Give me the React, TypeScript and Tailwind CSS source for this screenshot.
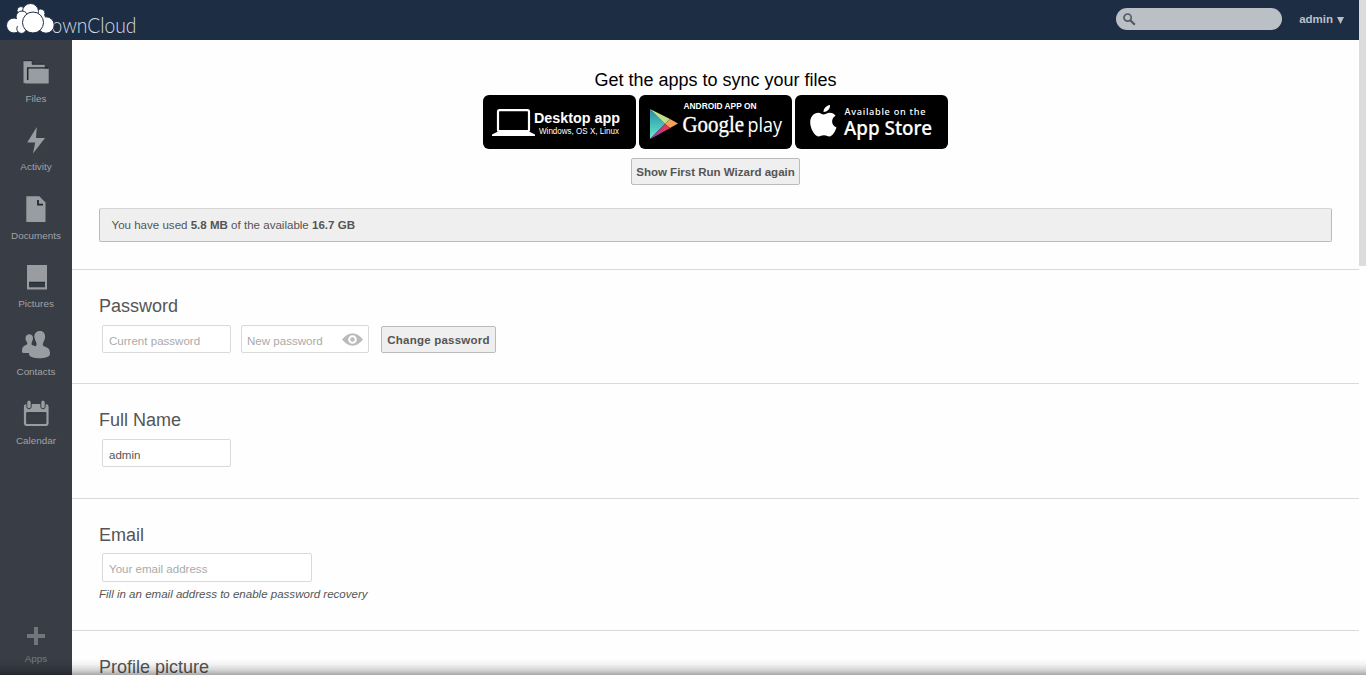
import React from "react";

const sans = "font-['Liberation_Sans',Arial,sans-serif]";

function Logo() {
  return (
    <svg width="140" height="40" viewBox="0 0 140 40" className="block" role="img" aria-label="ownCloud">
      <text x="51.500" y="33" textLength="85" lengthAdjust="spacingAndGlyphs" fill="#d5dae1" fontFamily="Lato, sans-serif" fontWeight="300" fontSize="21">
        ownCloud
      </text>
      <g fill="#fff" stroke="#1d2d44" strokeWidth="1">
        <circle cx="21" cy="10.500" r="4" />
        <circle cx="40.500" cy="13.500" r="4.500" />
        <circle cx="30.500" cy="11.500" r="8" />
        <circle cx="22" cy="17" r="6" />
        <circle cx="14" cy="25.500" r="7.500" />
        <circle cx="21.500" cy="28.700" r="4.700" />
        <circle cx="22.500" cy="18" r="5.500" stroke="none" />
        <circle cx="22" cy="22" r="6" stroke="none" />
        <circle cx="46" cy="25" r="8.200" />
        <circle cx="40" cy="18" r="5" stroke="none" />
        <circle cx="33" cy="22.500" r="10.500" />
      </g>
    </svg>
  );
}

const icons: Record<string, React.ReactNode> = {
  Files: (
    <>
      <path d="M3.500 6h8.700v3.500h12.500V28H3.500z" />
      <path d="M3.500 5.700h8.700v3.500h12.500" fill="none" stroke="#22272f" strokeWidth=".8" />
      <path d="M7.700 25V13H28" fill="none" stroke="#22272f" strokeWidth="1.500" />
      <path d="M9 13.700h19.700v14.800H5V26h4z" />
    </>
  ),
  Activity: <path d="M16.800 4 7.200 19.500h8L13 30.500 25 15h-9z" />,
  Documents: (
    <>
      <path d="M6.300 4.200h13l6.200 6.200V30H6.300z" />
      <path d="M18 8v4.600h5" fill="none" stroke="#22272f" strokeWidth="1.800" />
    </>
  ),
  Pictures: (
    <>
      <path d="M7 5h20v24.500H7z" />
      <path d="M9 22h16v5.300H9z" fill="#343a43" />
      <path d="M9 22.300h16" stroke="#22272f" />
    </>
  ),
  Contacts: (
    <>
      <path d="M9.300 6.200c2.400 0 3.900 1.800 3.700 4.400-.1 2.400-1.500 3.400-1.500 5.400 0 1.500 3.500 1.500 5 3v6H3.500c-1.500 0-1.700-1-1.500-2.500.3-4.500 3-5 4.500-5.700 1-.5 1-1.500.5-2.500-.8-1.300-1.500-2-1.500-3.700 0-2.600 1.400-4.400 3.800-4.400z" />
      <path d="M19.800 3c3.700 0 5.500 2.700 5.300 6.300-.2 3-2 4.700-2.300 7-.2 1.800 1.200 2.200 3 2.800 3 1 4.200 2.700 4.200 6.900 0 3-6 4.300-10.300 4.300C14.500 30.300 9 29 9 26c0-4 1.700-5.500 4.500-6.700 2-.8 3.200-1.200 3-3-.2-2.300-2-4-2.200-7C14.200 5.700 16.200 3 19.800 3z" />
      <path d="M13.800 9.500c.3 2.800 1.800 4.500 2.100 6.800" fill="none" stroke="#2b3038" strokeWidth=".8" />
    </>
  ),
  Calendar: (
    <>
      <rect x="5" y="8" width="22.500" height="20" rx="2" fill="none" stroke="#999ca0" strokeWidth="2.200" />
      <path d="M4.500 8h23.500v7.500H4.500z" />
      <path d="M7 15.700h19" stroke="#22272f" strokeWidth=".8" />
      <g stroke="#2b3038" strokeWidth=".9">
        <rect x="6.800" y="3" width="4.400" height="8.800" rx="2.200" />
        <rect x="20.800" y="3" width="4.400" height="8.800" rx="2.200" />
      </g>
    </>
  ),
  Apps: <path d="M14 12h4v7h7v4h-7v7h-4v-7H7v-4h7z" />,
};

function NavItem({ name, dim }: { name: string; dim?: boolean }) {
  return (
    <a className={"flex h-[68.350px] shrink-0 flex-col items-center " + (dim ? "opacity-60" : "")}>
      <svg width="32" height="32" viewBox="0 0 32 32" fill="#999ca0" className="block overflow-visible">
        {icons[name]}
      </svg>
      <span className="mt-[6px] text-[9.900px] leading-[12px] text-[#a0a3a7]">{name}</span>
    </a>
  );
}

function DesktopBadge() {
  return (
    <svg width="153" height="54" viewBox="0 0 153 54" className="block rounded-[6px] bg-black">
      <rect x="15" y="15.200" width="31" height="21" rx="1.500" fill="none" stroke="#fff" strokeWidth="2.200" />
      <path d="M14 37h33l5 2.500V41H9v-1.500z" fill="#fff" />
      <g fill="#fff" fontFamily="'Liberation Sans', Arial, sans-serif">
        <text x="51" y="27.500" fontSize="14" fontWeight="700" textLength="86" lengthAdjust="spacingAndGlyphs">Desktop app</text>
        <text x="56" y="39" fontSize="8.500" textLength="80" lengthAdjust="spacingAndGlyphs">Windows, OS X, Linux</text>
      </g>
    </svg>
  );
}

function PlayBadge() {
  return (
    <svg width="153" height="54" viewBox="0 0 153 54" className="block rounded-[6px] bg-black">
      <defs>
        <linearGradient id="play" x1="0" y1="0" x2="0" y2="1">
          <stop offset="0" stopColor="#2b87a8" />
          <stop offset="1" stopColor="#5ff0c8" />
        </linearGradient>
      </defs>
      <path d="M11 14v30l15-15z" fill="url(#play)" />
      <path d="M11 14l15 15 5-5z" fill="#bfe08a" />
      <path d="M31 24l-5 5 5 4 8-4.500z" fill="#f5a35c" />
      <path d="M26 29l5 4.300L20 39z" fill="#e8365f" />
      <path d="M26 29L11 44l12-6.500z" fill="#c43a78" />
      <path d="M19 36l-8 8 9-5z" fill="#8b48b8" />
      <g fill="#fff">
        <text x="44.500" y="14" fontSize="8.300" fontWeight="700" fontFamily="'Liberation Sans', Arial, sans-serif" textLength="73" lengthAdjust="spacingAndGlyphs">ANDROID APP ON</text>
        <text x="43.500" y="37" fontSize="22.500" fontFamily="'Liberation Serif', serif" textLength="61.500" lengthAdjust="spacingAndGlyphs" stroke="#fff" strokeWidth=".35">Google</text>
        <text x="108.500" y="37" fontSize="20" fontWeight="400" fontFamily="'Open Sans', sans-serif" textLength="34.500" lengthAdjust="spacingAndGlyphs">play</text>
      </g>
    </svg>
  );
}

function AppStoreBadge() {
  return (
    <svg width="153" height="54" viewBox="0 0 153 54" className="block rounded-[6px] bg-black">
      <g fill="#fff">
        <path d="M28.500 17c0-4 3-6.500 6.500-7 .3 4-2.800 6.800-6.500 7z" />
        <path d="M28.500 19.500c1.500 0 3.500-1.800 6.300-1.800 2.500 0 4.500 1.200 5.700 3-5 3-4.200 9.700 1 11.800-1.500 4.300-4 8.900-7.200 8.900-2 0-3-1.200-5.400-1.200s-3.500 1.200-5.400 1.200c-4 0-8.300-8-8.300-13.800 0-6.500 4-9.900 7.900-9.900 2.500 0 4 1.800 5.400 1.800z" />
        <g fontFamily="'Noto Sans', sans-serif">
          <text x="49.500" y="20" fontSize="9.200" fontWeight="500" textLength="81" lengthAdjust="spacing">Available on the</text>
          <text x="49" y="39.500" fontSize="19" fontWeight="500" textLength="88" lengthAdjust="spacingAndGlyphs" stroke="#fff" strokeWidth=".2">App Store</text>
        </g>
      </g>
    </svg>
  );
}

function Field({ className, children, dark }: { className: string; children: React.ReactNode; dark?: boolean }) {
  return (
    <div className={"flex shrink-0 items-center rounded-[2px] border border-[#d9d9d9] bg-white px-[6px] pt-[4px] text-[11.550px] leading-[14px] " + (dark ? "text-[#555] " : "text-[#aaa] ") + className}>
      {children}
    </div>
  );
}

function Button({ className, children }: { className: string; children: React.ReactNode }) {
  return (
    <button className={"flex h-[27px] items-center justify-center whitespace-nowrap rounded-[2px] border border-[#bbb] bg-[#efefef] text-[11.520px] font-bold leading-[14px] text-[#555] " + className}>
      {children}
    </button>
  );
}

function Section({ title, className, children }: { title: string; className: string; children?: React.ReactNode }) {
  return (
    <section className={"shrink-0 border-b border-[#d9d9d9] pl-[27px] pt-[25px] " + className}>
      <h2 className="text-[18px] leading-[22px] text-[#555]">{title}</h2>
      {children}
    </section>
  );
}

export default function App() {
  return (
    <div className={"relative flex h-[675px] w-[1366px] overflow-hidden bg-white " + sans}>
      <div className="flex w-[1359px] flex-col">
        <header className="flex h-[40px] shrink-0 items-center justify-between bg-[#1d2d44]">
          <Logo />
          <div className="flex items-center pb-[2px] pr-[15px]">
            <div className="flex h-[22px] w-[166px] items-center rounded-full bg-[#bbc0c7] pl-[7px]">
              <svg width="13" height="13" viewBox="0 0 13 13" fill="none" stroke="#555b63">
                <circle cx="4.600" cy="4.600" r="3.600" strokeWidth="1.700" />
                <path d="M7.300 7.300l4.500 4.500" strokeWidth="2.300" />
              </svg>
            </div>
            <span className="ml-[17px] text-[11.500px] font-bold leading-[14px] text-[#bbc0c7]">admin</span>
            <svg width="7" height="7" viewBox="0 0 7 7" fill="#bbc0c7" className="ml-[4px] mt-[3px]">
              <path d="M0 0h7L3.500 7z" />
            </svg>
          </div>
        </header>
        <div className="flex min-h-0 flex-1">
          <nav className="flex w-[72px] shrink-0 flex-col justify-between bg-[#383d46] pt-[15px]">
            <div className="flex flex-col">
              <NavItem name="Files" />
              <NavItem name="Activity" />
              <NavItem name="Documents" />
              <NavItem name="Pictures" />
              <NavItem name="Contacts" />
              <NavItem name="Calendar" />
            </div>
            <div className="-mb-[8px]">
              <NavItem name="Apps" dim />
            </div>
          </nav>
          <main className="flex min-w-0 flex-1 flex-col overflow-hidden bg-[#fefefe]">
            <section className="flex h-[230px] shrink-0 flex-col items-center border-b border-[#d9d9d9] px-[27px] pt-[29px]">
              <h2 className="text-[18px] leading-[22px] text-black">Get the apps to sync your files</h2>
              <div className="mt-[4px] flex gap-[3px]">
                <DesktopBadge />
                <PlayBadge />
                <AppStoreBadge />
              </div>
              <Button className="mt-[9px] w-[169px]">Show First Run Wizard again</Button>
              <div className="mt-[23px] flex h-[34px] w-full items-center rounded-[2px] border border-[#bbb] border-t-[#d5d5d5] bg-[#efefef] pl-[11.500px] pt-px text-[11.550px] text-[#555]">
                <p>
                  You have used <strong>5.8 MB</strong> of the available <strong>16.7 GB</strong>
                </p>
              </div>
            </section>
            <Section title="Password" className="h-[114px]">
              <div className="ml-[3px] mt-[8px] flex">
                <Field className="h-[28px] w-[129px]">Current password</Field>
                <Field className="ml-[10px] h-[28px] w-[128px] justify-between">
                  <span className="-ml-px">New password</span>
                  <svg width="21" height="13" viewBox="0 0 21 13" className="-mr-px mb-[4px]">
                    <path d="M0 6.500Q10.500-6 21 6.500 10.500 19 0 6.500z" fill="#bbb" />
                    <circle cx="10.500" cy="6.500" r="3.300" fill="none" stroke="#fff" strokeWidth="2" />
                  </svg>
                </Field>
                <Button className="ml-[12px] mt-px w-[115px]">
                  <span className="tracking-[0.220px]">Change password</span>
                </Button>
              </div>
            </Section>
            <Section title="Full Name" className="h-[115px]">
              <Field className="ml-[3px] mt-[8px] h-[28px] w-[129px]" dark>admin</Field>
            </Section>
            <Section title="Email" className="h-[132px]">
              <Field className="ml-[3px] mt-[7px] h-[29px] w-[210px] pb-px">Your email address</Field>
              <p className="mt-[5px] text-[11.540px] italic leading-[14px] text-[#555]">Fill in an email address to enable password recovery</p>
            </Section>
            <Section title="Profile picture" className="h-[114px]" />
          </main>
        </div>
      </div>
      <div className="w-[7px]">
        <div className="h-[266px] bg-[#dcdcdc]" />
      </div>
      <div className="pointer-events-none absolute inset-x-0 bottom-0 h-[16px] bg-[linear-gradient(to_bottom,rgba(0,0,0,0)_0%,rgba(0,0,0,0.05)_35%,rgba(0,0,0,0.17)_70%,rgba(0,0,0,0.34)_100%)]" />
    </div>
  );
}
